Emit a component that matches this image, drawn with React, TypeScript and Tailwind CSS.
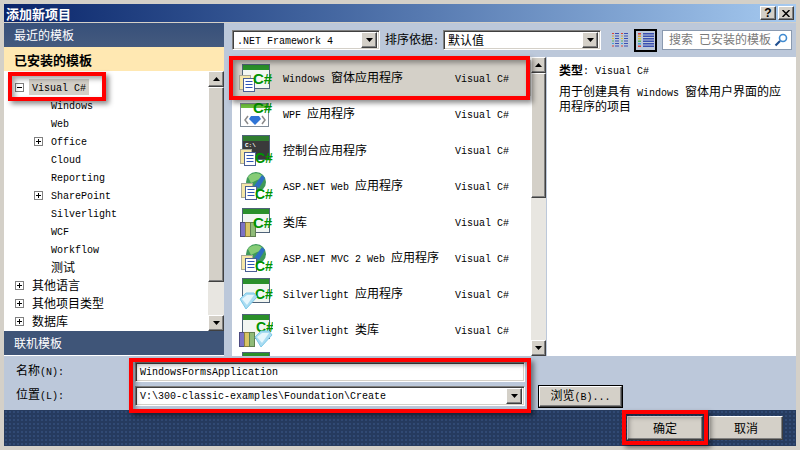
import type { ReactNode } from "react";

const cjkFont = "font-['Noto_Sans_CJK_SC',sans-serif]";
const raised =
  "border border-t-white border-l-white border-r-[#404040] border-b-[#404040] bg-[#d4d0c8] shadow-[inset_-1px_-1px_0_#808080]";
const sunken =
  "border border-t-[#808080] border-l-[#808080] border-r-white border-b-white shadow-[inset_1px_1px_0_#404040,inset_-1px_-1px_0_#d4d0c8]";

// SimSun style text: half width latin next to full width CJK
function T({ children }: { children: string }) {
  const parts = children.split(/([\u0000-\u00ff]+)/).filter(Boolean);
  return (
    <span className="whitespace-pre">
      {parts.map((p, i) =>
        /^[\u0000-\u00ff]/.test(p) ? (
          <span key={i} className="font-['Liberation_Mono',monospace] text-[10px]">
            {p}
          </span>
        ) : (
          <span key={i} className="font-['Noto_Sans_CJK_SC',sans-serif] text-[12px]">
            {p}
          </span>
        )
      )}
    </span>
  );
}

function Arrow({ up }: { up?: boolean }) {
  return (
    <svg width="7" height="4" viewBox="0 0 7 4">
      <path d={up ? "M3.5 0L7 4H0Z" : "M0 0H7L3.5 4Z"} fill="#000" />
    </svg>
  );
}

function ScrollBar({ width, thumb }: { width: string; thumb: string }) {
  return (
    <div className={`${width} flex flex-col bg-[#e8e6e1] shrink-0`}>
      <div className={`${raised} h-4 flex items-center justify-center shrink-0`}>
        <Arrow up />
      </div>
      <div className={`${raised} ${thumb} shrink-0`} />
      <div className="flex-1" />
      <div className={`${raised} h-4 flex items-center justify-center shrink-0`}>
        <Arrow />
      </div>
    </div>
  );
}

function Expander({ open }: { open?: boolean }) {
  return (
    <svg width="9" height="9" viewBox="0 0 9 9" className="shrink-0">
      <rect x="0.5" y="0.5" width="8" height="8" fill="#fff" stroke="#808080" />
      <path d={open ? "M2 4.5H7" : "M2 4.5H7M4.5 2V7"} stroke="#000" />
    </svg>
  );
}

type IconKind = "forms" | "wpf" | "console" | "web" | "lib" | "sl" | "sllib" | "partial";

function Doc({ x, y }: { x: number; y: number }) {
  return (
    <g>
      <rect x={x + 0.5} y={y + 0.5} width="11" height="14" fill="#f6e7a8" stroke="#a8a898" />
      <rect x={x + 4.5} y={y + 3.5} width="11" height="13" fill="#fff" stroke="#4a5f95" />
      <path
        d={`M${x + 6.5} ${y + 6.5}h7M${x + 6.5} ${y + 9.5}h7M${x + 6.5} ${y + 12.5}h7`}
        stroke="#2f55b5"
      />
    </g>
  );
}

function Books({ x, y }: { x: number; y: number }) {
  return (
    <g>
      <rect x={x + 0.5} y={y + 0.5} width="5" height="14" fill="#7c72c4" stroke="#4c4a80" />
      <rect x={x + 5.5} y={y + 0.5} width="5" height="14" fill="#d8c466" stroke="#8c8040" />
      <rect x={x + 10.5} y={y + 0.5} width="5" height="14" fill="#8fbb78" stroke="#5f8050" />
    </g>
  );
}

function Gem({ x, y }: { x: number; y: number }) {
  return (
    <g>
      <path
        d={`M${x + 1} ${y + 7}L${x + 7} ${y + 1}H${x + 15}L${x + 18} ${y + 5}L${x + 7} ${y + 17}Z`}
        fill="#a9dcf2"
        stroke="#7cc8e8"
      />
      <path d={`M${x + 3} ${y + 7}L${x + 8} ${y + 3}H${x + 15}L${x + 8} ${y + 13}Z`} fill="#e6f6fc" />
    </g>
  );
}

function Globe() {
  return (
    <g>
      <circle cx="17" cy="13" r="10" fill="#3f9a5a" />
      <path d="M9 8C13 3 22 3 25 9L18 11L12 14Z" fill="#86cc76" />
      <path d="M15 17L23 6L26 9L20 19Z" fill="#2e6fc2" />
    </g>
  );
}

function CSharp({ x, y, size = 15 }: { x: number; y: number; size?: number }) {
  return (
    <text x={x} y={y} fontFamily="Liberation Sans" fontSize={size} fontWeight="700" fill="#009400">
      C#
    </text>
  );
}

function WindowBase({ dark, y = 3 }: { dark?: boolean; y?: number }) {
  return (
    <g>
      <rect x="3.5" y={y + 0.5} width="27" height="24" fill={dark ? "#3a3a3a" : "#f2f6f2"} stroke="#4f6378" />
      <rect x="4" y={y + 1} width="26" height="5" fill={dark ? "#2f7d2f" : "#2a8f2a"} />
    </g>
  );
}

function ProjectIcon({ kind }: { kind: IconKind }) {
  return (
    <svg width="34" height="34" viewBox="0 0 34 34" className="shrink-0">
      {kind === "partial" && <WindowBase />}
      {kind === "forms" && (
        <>
          <WindowBase />
          <Doc x={0} y={14} />
          <CSharp x={14} y={23} />
        </>
      )}
      {kind === "wpf" && (
        <>
          <rect x="1.5" y="6.5" width="28" height="23" fill="#fff" stroke="#808c98" />
          <rect x="2" y="7" width="27" height="4" fill="#6fc23f" />
          <path d="M9 19L6 23L9 27M23 19L26 23L23 27" stroke="#8a8a8a" fill="none" strokeWidth="1.5" />
          <path d="M12 19H20L22 22L16 28L10 22Z" fill="#2f74d6" />
          <CSharp x={14} y={16} />
        </>
      )}
      {kind === "console" && (
        <>
          <WindowBase dark y={2} />
          <text x="6" y="14" fontFamily="Liberation Mono" fontSize="6" fontWeight="700" fill="#fff">
            C:\
          </text>
          <Doc x={1} y={16} />
          <CSharp x={16} y={30} size={14} />
        </>
      )}
      {kind === "web" && (
        <>
          <Globe />
          <Doc x={2} y={14} />
          <CSharp x={16} y={30} size={14} />
        </>
      )}
      {kind === "lib" && (
        <>
          <WindowBase />
          <Books x={1} y={17} />
          <CSharp x={14} y={23} />
        </>
      )}
      {kind === "sl" && (
        <>
          <WindowBase y={1} />
          <CSharp x={16} y={22} size={14} />
          <Gem x={0} y={15} />
        </>
      )}
      {kind === "sllib" && (
        <>
          <WindowBase y={1} />
          <CSharp x={17} y={19} size={14} />
          <Books x={0} y={19} />
          <Gem x={15} y={17} />
        </>
      )}
    </svg>
  );
}

const templates: { name: string; icon: IconKind }[] = [
  { name: "Windows 窗体应用程序", icon: "forms" },
  { name: "WPF 应用程序", icon: "wpf" },
  { name: "控制台应用程序", icon: "console" },
  { name: "ASP.NET Web 应用程序", icon: "web" },
  { name: "类库", icon: "lib" },
  { name: "ASP.NET MVC 2 Web 应用程序", icon: "web" },
  { name: "Silverlight 应用程序", icon: "sl" },
  { name: "Silverlight 类库", icon: "sllib" },
  { name: "", icon: "partial" },
];

const tree: { label: string; depth: number; exp?: boolean }[] = [
  { label: "Windows", depth: 1 },
  { label: "Web", depth: 1 },
  { label: "Office", depth: 1, exp: true },
  { label: "Cloud", depth: 1 },
  { label: "Reporting", depth: 1 },
  { label: "SharePoint", depth: 1, exp: true },
  { label: "Silverlight", depth: 1 },
  { label: "WCF", depth: 1 },
  { label: "Workflow", depth: 1 },
  { label: "测试", depth: 1 },
  { label: "其他语言", depth: 0, exp: true },
  { label: "其他项目类型", depth: 0, exp: true },
  { label: "数据库", depth: 0, exp: true },
];

function ViewIcon({ double }: { double?: boolean }) {
  const colors = ["#d8433a", "#e0a030", "#d8c83a", "#5cb85c", "#46a0d8", "#d8433a"];
  if (double) {
    return (
      <svg width="16" height="16" viewBox="0 0 16 16">
        {colors.map((c, i) => (
          <g key={i}>
            <rect x="0" y={1 + i * 2.5} width="2" height="1" fill={c} />
            <rect x="3" y={1 + i * 2.5} width="4" height="1" fill="#3a4fb0" />
            <rect x="9" y={1 + i * 2.5} width="2" height="1" fill={c} />
            <rect x="12" y={1 + i * 2.5} width="4" height="1" fill="#3a4fb0" />
          </g>
        ))}
      </svg>
    );
  }
  return (
    <svg width="16" height="16" viewBox="0 0 16 16">
      {colors.map((c, i) => (
        <g key={i}>
          <rect x="0" y={1 + i * 2.5} width="3" height="1.5" fill={c} />
          <rect x="5" y={1 + i * 2.5} width="11" height="1.5" fill="#3a4fb0" />
        </g>
      ))}
    </svg>
  );
}

function Combo({ className, children }: { className: string; children: ReactNode }) {
  return (
    <div className={`${className} ${sunken} bg-white flex items-center pl-1 pr-[2px] h-5`}>
      <div className="flex-1">{children}</div>
      <div className={`${raised} w-4 h-4 flex items-center justify-center shrink-0`}>
        <Arrow />
      </div>
    </div>
  );
}

function Mark({ className }: { className: string }) {
  return (
    <div
      className={`absolute ${className} border-[4px] border-[#ff0000] shadow-[3px_3px_5px_rgba(0,0,0,0.45),inset_3px_3px_5px_rgba(0,0,0,0.35)]`}
    />
  );
}

export default function App() {
  return (
    <div className="relative w-[800px] h-[450px] overflow-hidden bg-[#d4d0c8] p-1 flex flex-col text-black text-[12px] leading-none">
      {/* title bar */}
      <div className="h-[18px] shrink-0 mb-[1px] flex items-center justify-between pl-[2px] pr-[2px] bg-gradient-to-r from-[#0a246a] to-[#a6caf0]">
        <span className={`${cjkFont} text-[13px] font-bold text-white leading-none`}>添加新项目</span>
        <div className="flex gap-[2px]">
          <div className={`${raised} w-4 h-[14px] flex items-center justify-center font-['Liberation_Sans',sans-serif] text-[12px] font-bold leading-none`}>
            ?
          </div>
          <div className={`${raised} w-4 h-[14px] flex items-center justify-center`}>
            <svg width="8" height="7" viewBox="0 0 8 7">
              <path d="M0.5 0L7.5 7M7.5 0L0.5 7" stroke="#000" strokeWidth="1.5" />
            </svg>
          </div>
        </div>
      </div>

      {/* main area */}
      <div className="h-[333px] shrink-0 flex bg-[#bcc8da]">
        {/* left panel */}
        <div className="w-[220px] shrink-0 flex flex-col pb-[1px] bg-white">
          <div className={`${cjkFont} h-6 shrink-0 flex items-center pl-[10px] text-[12px] text-white bg-gradient-to-b from-[#37507a] to-[#445a7e]`}>
            最近的模板
          </div>
          <div className={`${cjkFont} h-6 shrink-0 flex items-center pl-[10px] text-[13px] font-bold bg-[#ffe8b2]`}>
            已安装的模板
          </div>
          <div className="flex-1 flex min-h-0">
            <div className="flex-1 pt-[7px] overflow-hidden">
              <div className="h-[18px] flex items-center pl-[11px]">
                <Expander open />
                <div className="ml-[5px] px-[3px] bg-[#d4d0c8] h-4 flex items-center">
                  <T>Visual C#</T>
                </div>
              </div>
              {tree.map((t) => (
                <div
                  key={t.label}
                  className={`h-[18px] flex items-center ${t.depth === 1 ? "pl-[30px]" : "pl-[11px]"}`}
                >
                  {t.exp ? <Expander /> : <span className="w-[9px] shrink-0" />}
                  <span className="ml-[8px]">
                    <T>{t.label}</T>
                  </span>
                </div>
              ))}
            </div>
            <ScrollBar width="w-4" thumb="h-[195px]" />
          </div>
          <div className={`${cjkFont} h-6 shrink-0 flex items-center pl-[10px] text-[12px] text-white bg-[#3f5578]`}>
            联机模板
          </div>
        </div>

        {/* middle and right */}
        <div className="flex-1 flex flex-col min-w-0">
          <div className="h-[34px] shrink-0 flex items-center pl-2 pr-1">
            <Combo className="w-[148px]">
              <T>.NET Framework 4</T>
            </Combo>
            <span className="ml-[5px] w-[58px] shrink-0">
              <T>排序依据:</T>
            </span>
            <Combo className="w-[158px]">
              <T>默认值</T>
            </Combo>
            <div className="ml-[11px] w-[16px] flex justify-center">
              <ViewIcon double />
            </div>
            <div className="ml-[6px] w-[23px] h-[23px] border-2 border-black flex items-center justify-center shrink-0">
              <ViewIcon />
            </div>
            <div className="ml-[5px] flex-1 h-5 bg-white border border-[#8a9ab0] flex items-center pl-[6px] pr-[3px] justify-between text-[#7a7a7a]">
              <T>搜索 已安装的模板</T>
              <svg width="14" height="14" viewBox="0 0 14 14">
                <circle cx="9" cy="5" r="3.5" fill="none" stroke="#3f8ad0" strokeWidth="1.6" />
                <path d="M6 8L1.5 12.5" stroke="#1f4f90" strokeWidth="2.2" />
              </svg>
            </div>
          </div>

          <div className="flex-1 flex min-h-0 pl-2">
            <div className="w-[299px] shrink-0 bg-white pt-[3px] overflow-hidden">
              {templates.map((t, i) => (
                <div key={i} className={`h-9 flex items-center ${i === 0 ? "bg-[#d4d0c8]" : ""}`}>
                  <div className="w-[51px] pl-[7px] shrink-0">
                    <ProjectIcon kind={t.icon} />
                  </div>
                  <div className="w-[172px] shrink-0">{t.name && <T>{t.name}</T>}</div>
                  {t.name && <T>Visual C#</T>}
                </div>
              ))}
            </div>
            <ScrollBar width="w-[15px]" thumb="h-[125px]" />
            <div className="flex-1 ml-[1px] bg-white pl-3 pt-[6px] text-left">
              <div className="h-[14px] flex items-center">
                <span className={`${cjkFont} text-[12px] font-bold`}>类型</span>
                <T>: Visual C#</T>
              </div>
              <div className="mt-[8px] h-[14px] flex items-center">
                <T>用于创建具有 Windows 窗体用户界面的应</T>
              </div>
              <div className="h-[14px] flex items-center">
                <T>用程序的项目</T>
              </div>
            </div>
          </div>
        </div>
      </div>

      {/* name and location */}
      <div className="h-[54px] shrink-0 bg-[#bcc8da] flex flex-col pt-[6px] gap-1">
        <div className="flex items-center h-5">
          <span className="w-[131px] pl-3 shrink-0 -mt-[2px]">
            <T>名称(N):</T>
          </span>
          <div className={`${sunken} w-[390px] h-5 bg-white flex items-center pl-1 pb-[2px]`}>
            <T>WindowsFormsApplication</T>
          </div>
        </div>
        <div className="flex items-center h-5">
          <span className="w-[131px] pl-3 shrink-0 -mt-[2px]">
            <T>位置(L):</T>
          </span>
          <Combo className="w-[390px]">
            <div className="-mt-[2px]">
              <T>V:\300-classic-examples\Foundation\Create</T>
            </div>
          </Combo>
          <div className="ml-[13px] w-[85px] h-[23px] border border-black">
            <div className={`${raised} w-full h-full flex items-center justify-center`}>
              <T>浏览(B)...</T>
            </div>
          </div>
        </div>
      </div>

      {/* footer */}
      <div className="h-9 shrink-0 flex items-center justify-end pr-[13px] gap-[6px] bg-[#263b5f] bg-[image:radial-gradient(#314a74_1px,transparent_1px)] bg-[length:4px_4px]">
        <div className={`${raised} w-[76px] h-6 flex items-center justify-center`}>
          <T>确定</T>
        </div>
        <div className={`${raised} w-[74px] h-6 flex items-center justify-center`}>
          <T>取消</T>
        </div>
      </div>

      {/* red annotation boxes */}
      <Mark className="left-[8px] top-[72px] w-[98px] h-[29px]" />
      <Mark className="left-[229px] top-[56px] w-[301px] h-[44px]" />
      <Mark className="left-[129px] top-[358px] w-[402px] h-[55px]" />
      <Mark className="left-[622px] top-[410px] w-[86px] h-[35px]" />
    </div>
  );
}
